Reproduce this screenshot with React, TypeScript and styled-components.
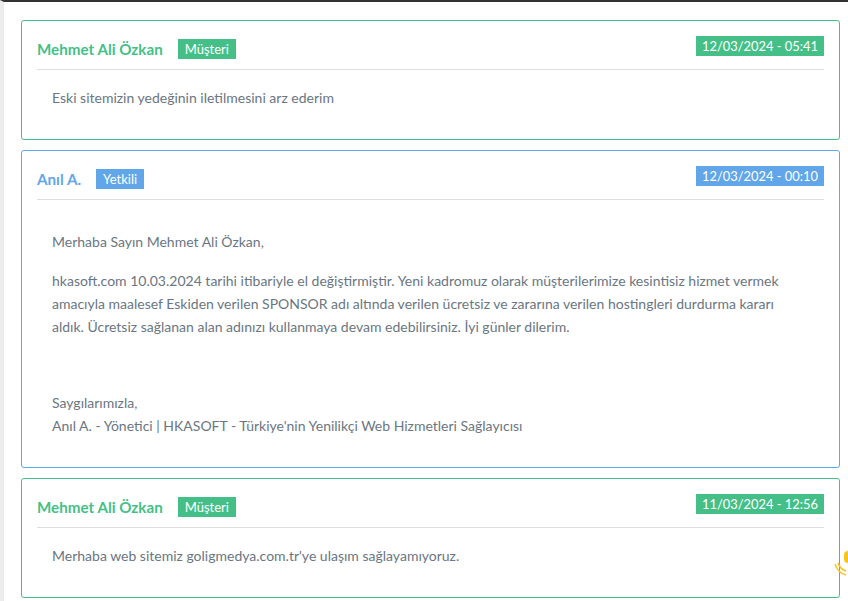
import styled, { createGlobalStyle } from "styled-components"

type Role = "customer" | "staff"

const palette = {
  customer: "#45bf88",
  staff: "#61a6e9",
}

const GlobalStyle = createGlobalStyle`
  html, body {
    margin: 0;
    padding: 0;
    background: #fff;
  }
  body {
    font-family: Lato, "Noto Sans", sans-serif;
    color: #6a7682;
  }
  * { box-sizing: border-box; }
`

const Page = styled.div`
  min-height: 601px;
  border-top: 2px solid #333;
  border-left: 4px solid #ececec;
  padding: 18px 8px 4px 17px;
`

const Card = styled.div<{ $role: Role }>`
  border: 1px solid ${p => palette[p.$role]};
  border-radius: 3px;
  padding: 15px 15px 0 15px;
  margin-bottom: 10px;
  background: #fff;
`

const Head = styled.div`
  display: flex;
  justify-content: space-between;
  align-items: flex-start;
  padding-bottom: 10px;
  border-bottom: 1px solid #dedede;
`

const Who = styled.div`
  display: flex;
  align-items: center;
  gap: 15px;
  margin-top: 3px;
  height: 20px;
`

const Name = styled.span<{ $role: Role }>`
  font-size: 15.2px;
  font-weight: 700;
  color: ${p => palette[p.$role]};
`

const Tag = styled.span<{ $role: Role }>`
  display: inline-flex;
  align-items: center;
  height: 20px;
  padding: 0 7px;
  font-size: 13px;
  color: #fff;
  background: ${p => palette[p.$role]};
`

const Stamp = styled(Tag)`
  padding: 0 6px;
  font-size: 12.9px;
`

const Body = styled.div<{ $top?: number }>`
  padding: ${p => p.$top ?? 16}px 0 30px 15px;
  font-size: 14px;
  line-height: 23px;
`

const Para = styled.p<{ $after?: number }>`
  margin: 0 0 ${p => p.$after ?? 16}px;
  white-space: nowrap;
  &:last-child { margin-bottom: 0; }
`

// little yellow launcher peeking in from the right edge
const Launcher = styled.div`
  position: fixed;
  right: -10px;
  bottom: 24px;
  width: 24px;
  height: 26px;
`

type Msg = {
  role: Role
  name: string
  date: string
  top?: number
  paras: { lines: string[]; after?: number }[]
}

const messages: Msg[] = [
  {
    role: "customer",
    name: "Mehmet Ali Özkan",
    date: "12/03/2024 - 05:41",
    paras: [{ lines: ["Eski sitemizin yedeğinin iletilmesini arz ederim"] }],
  },
  {
    role: "staff",
    name: "Anıl A.",
    date: "12/03/2024 - 00:10",
    top: 30,
    paras: [
      { lines: ["Merhaba Sayın Mehmet Ali Özkan,"] },
      {
        lines: [
          "hkasoft.com 10.03.2024 tarihi itibariyle el değiştirmiştir. Yeni kadromuz olarak müşterilerimize kesintisiz hizmet vermek",
          "amacıyla maalesef Eskiden verilen SPONSOR adı altında verilen ücretsiz ve zararına verilen hostingleri durdurma kararı",
          "aldık. Ücretsiz sağlanan alan adınızı kullanmaya devam edebilirsiniz. İyi günler dilerim.",
        ],
        after: 53,
      },
      {
        lines: [
          "Saygılarımızla,",
          "Anıl A. - Yönetici | HKASOFT - Türkiye'nin Yenilikçi Web Hizmetleri Sağlayıcısı",
        ],
      },
    ],
  },
  {
    role: "customer",
    name: "Mehmet Ali Özkan",
    date: "11/03/2024 - 12:56",
    paras: [{ lines: ["Merhaba web sitemiz goligmedya.com.tr'ye ulaşım sağlayamıyoruz."] }],
  },
]

const App = () => {
  return (
    <>
      <GlobalStyle />
      <Page>
        {messages.map((m, i) => (
          <Card key={i} $role={m.role}>
            <Head>
              <Who>
                <Name $role={m.role}>{m.name}</Name>
                <Tag $role={m.role}>{m.role === "customer" ? "Müşteri" : "Yetkili"}</Tag>
              </Who>
              <Stamp $role={m.role}>{m.date}</Stamp>
            </Head>
            <Body $top={m.top}>
              {m.paras.map((p, j) => (
                <Para key={j} $after={p.after}>
                  {p.lines.map((l, k) => (
                    <span key={k}>
                      {k > 0 && <br />}
                      {l}
                    </span>
                  ))}
                </Para>
              ))}
            </Body>
          </Card>
        ))}
      </Page>
      <Launcher>
        <svg width="24" height="26" viewBox="0 0 24 26">
          <rect x="10" y="0" width="14" height="12" rx="4" fill="#f7c51e" />
          <path d="M4 12 q2 6 8 8" stroke="#f7c51e" strokeWidth="1.6" fill="none" />
          <path d="M1 13 q3 9 11 11" stroke="#f7c51e" strokeWidth="1.4" fill="none" />
        </svg>
      </Launcher>
    </>
  )
}

export default App
